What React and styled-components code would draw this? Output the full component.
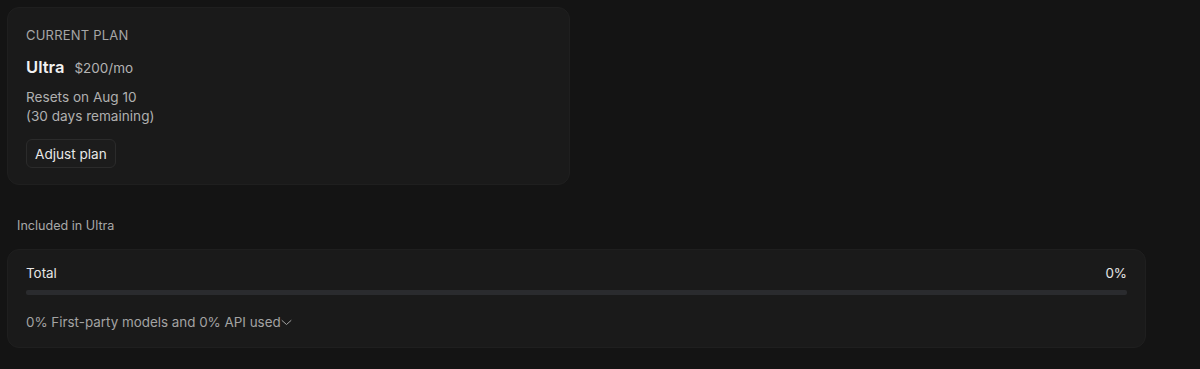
import React from "react";
import styled, { createGlobalStyle } from "styled-components";

const Global = createGlobalStyle`
  html, body { margin: 0; padding: 0; background: #141414; }
  body { font-family: Inter, "Noto Sans", sans-serif; color: #e6e6e6; -webkit-font-smoothing: antialiased; }
`;

const Page = styled.div`
  width: 1200px;
  height: 369px;
  box-sizing: border-box;
  padding: 7px 55px 0 7px;
  display: flex;
  flex-direction: column;
`;

const Card = styled.div`
  box-sizing: border-box;
  flex-shrink: 0;
  background: #1a1a1a;
  border: 1px solid #1f1f1f;
  border-radius: 12px;
  width: ${(p) => p.$width};
  padding: ${(p) => p.$padding};
  display: flex;
  flex-direction: column;
`;

const Eyebrow = styled.div`
  font-size: 13px;
  line-height: 16px;
  color: #a6a6a6;
  letter-spacing: 0.2px;
`;

const PlanRow = styled.div`
  display: flex;
  align-items: baseline;
  gap: 10px;
  margin-top: 14px;
  line-height: 20px;
`;

const PlanName = styled.span`
  font-size: 16.5px;
  font-weight: 600;
  color: #f2f2f2;
`;

const Price = styled.span`
  font-size: 13.5px;
  color: #b3b3b3;
`;

const Meta = styled.div`
  margin-top: 10px;
  font-size: 13.6px;
  line-height: 19px;
  color: #b0b0b0;
`;

const Button = styled.button`
  align-self: flex-start;
  flex-shrink: 0;
  margin-top: 13px;
  height: 29px;
  padding: 0 8px;
  background: #1c1c1c;
  border: 1px solid #2b2b2b;
  border-radius: 6px;
  color: #e8e8e8;
  font-family: inherit;
  font-size: 13.6px;
`;

const SectionLabel = styled.div`
  margin: 33px 0 0 10px;
  font-size: 12.6px;
  line-height: 16px;
  color: #a8a8a8;
`;

const UsageCard = styled(Card)`
  margin-top: 15px;
`;

const TotalRow = styled.div`
  display: flex;
  justify-content: space-between;
  font-size: 13.4px;
  line-height: 16px;
  color: #e6e6e6;
`;

const Track = styled.div`
  margin-top: 9px;
  height: 5px;
  border-radius: 2px;
  background: #2a2b2e;
`;

const Breakdown = styled.div`
  margin-top: 19px;
  display: flex;
  align-items: center;
  font-size: 13.4px;
  line-height: 16px;
  color: #a3a3a3;
`;

export default function App() {
  return (
    <>
      <Global />
      <Page>
        <Card $width="563px" $padding="19px 18px 16px">
          <Eyebrow>CURRENT PLAN</Eyebrow>
          <PlanRow>
            <PlanName>Ultra</PlanName>
            <Price>$200/mo</Price>
          </PlanRow>
          <Meta>
            Resets on Aug 10
            <br />
            (30 days remaining)
          </Meta>
          <Button>Adjust plan</Button>
        </Card>
        <SectionLabel>Included in Ultra</SectionLabel>
        <UsageCard $width="1139px" $padding="15px 18px 17px">
          <TotalRow>
            <span>Total</span>
            <span>0%</span>
          </TotalRow>
          <Track />
          <Breakdown>
            0% First-party models and 0% API used
            <svg width="11" height="11" viewBox="0 0 11 11" fill="none" stroke="#a3a3a3" strokeWidth="1" strokeLinecap="round" strokeLinejoin="round">
              <path d="M1 3.5 5.5 7.5 10 3.5" />
            </svg>
          </Breakdown>
        </UsageCard>
      </Page>
    </>
  );
}
